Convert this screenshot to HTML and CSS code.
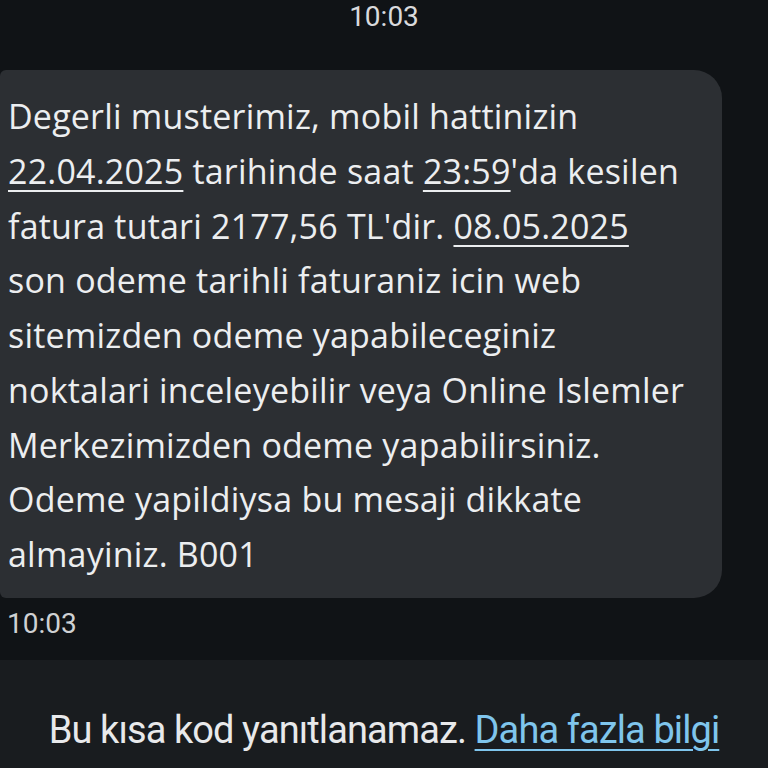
FILE: index.html
```html
<!DOCTYPE html>
<html lang="tr">
<head>
<meta charset="utf-8">
<link rel="stylesheet" href="styles.css">
</head>
<body>
<div class="screen">
  <div class="top-time">10:03</div>
  <div class="bubble">
    <p class="msg">Degerli musterimiz, mobil hattinizin<br><span class="u">22.04.2025</span> tarihinde saat <span class="u">23:59</span>'da kesilen<br>fatura tutari 2177,56 TL'dir. <span class="u">08.05.2025</span><br>son odeme tarihli faturaniz icin web<br>sitemizden odeme yapabileceginiz<br>noktalari inceleyebilir veya Online Islemler<br>Merkezimizden odeme yapabilirsiniz.<br>Odeme yapildiysa bu mesaji dikkate<br>almayiniz. B001</p>
  </div>
  <div class="stamp">10:03</div>
  <div class="footer">
    <span class="note">Bu kısa kod yanıtlanamaz. <span class="link">Daha fazla bilgi</span></span>
  </div>
</div>
</body>
</html>
```
FILE: styles.css
```css
html, body {
  margin: 0;
  padding: 0;
  background: #101316;
}
.screen {
  width: 768px;
  height: 768px;
  display: flex;
  flex-direction: column;
  overflow: hidden;
  font-family: Roboto, "Noto Sans", sans-serif;
  color: #e6e7e9;
}
.top-time {
  height: 70px;
  box-sizing: border-box;
  padding-top: 1px;
  text-align: center;
  font-size: 28px;
  line-height: 32px;
  color: #d9dadc;
}
.bubble {
  width: 722px;
  box-sizing: border-box;
  background: #2c2f33;
  border-radius: 6px 28px 28px 6px;
  padding: 19px 0 16px 8px;
}
.msg {
  margin: 0;
  font-family: "Open Sans", Roboto, sans-serif;
  font-size: 34px;
  letter-spacing: 0.2px;
  line-height: 54.75px;
  white-space: nowrap;
  color: #eceef0;
}
.u {
  text-decoration: underline;
  text-decoration-thickness: 2px;
  text-underline-offset: 6px;
}
.stamp {
  height: 62px;
  box-sizing: border-box;
  padding: 10px 0 0 7px;
  font-size: 28px;
  line-height: 32px;
  color: #cfd1d3;
}
.footer {
  flex: 1;
  background: #191c1f;
  display: flex;
  justify-content: center;
  padding: 48px 0 0 0;
  box-sizing: border-box;
}
.note {
  font-size: 38px;
  line-height: 44px;
  letter-spacing: -0.9px;
  color: #e8e9eb;
}
.link {
  color: #7fc5ec;
  text-decoration: underline;
  text-decoration-thickness: 2px;
  text-underline-offset: 6px;
}
```
